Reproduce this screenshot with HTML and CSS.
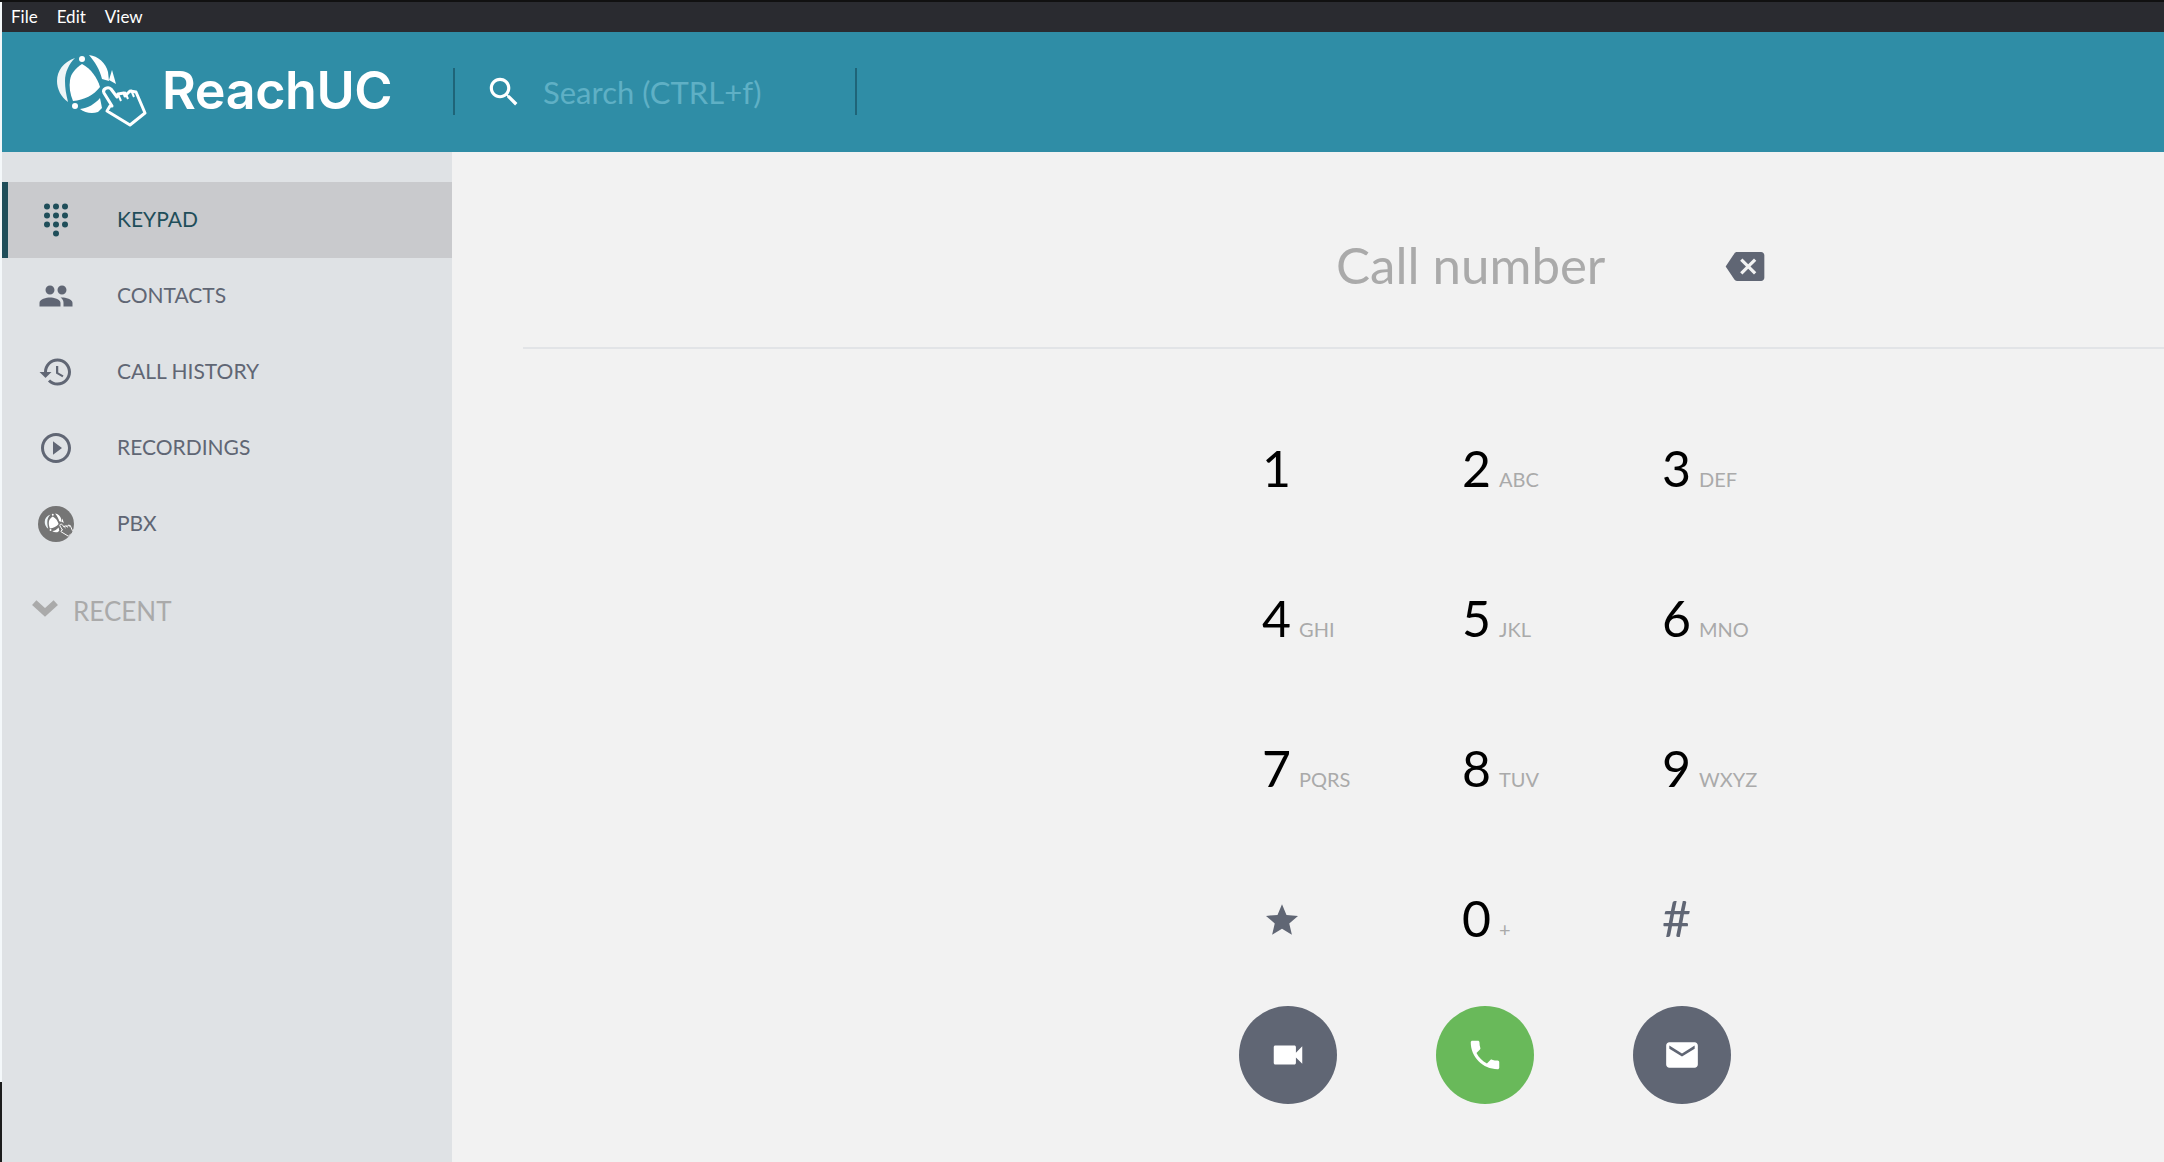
FILE: index.html
```html
<!DOCTYPE html>
<html lang="en">
<head>
  <meta charset="UTF-8" />
  <title>ReachUC</title>
  <link rel="stylesheet" href="styles.css">
</head>
<body>

<svg class="defs" aria-hidden="true">
  <symbol id="logo" viewBox="0 2 130 120">
    <path fill="#eef5f7" d="M45 28C33 32 27 41 27 51c0 8 4 16 11 21-2-8-3-14-3-21 0-9 4-17 10-23z"/>
    <circle fill="#fff" cx="52" cy="29" r="3"/>
    <circle fill="#fff" cx="45" cy="76" r="3"/>
    <path fill="#fff" d="M52 34c9 5 15 13 18 23-6 8-16 13-27 14-3-7-4-14-3-21 1-7 6-12 12-16z"/>
    <path fill="#fff" d="M59 25c9 1 17 8 19 17l1 9-7-2c-2-9-7-17-13-24z"/>
    <path fill="#fff" d="M82 40l4 14-7-4z"/>
    <path fill="#fff" d="M50 79c8-1 15-5 20-11l2 10-4 4c-6 2-13 1-18-3z"/>
    <path fill="currentColor" stroke="#fff" stroke-width="3" stroke-linejoin="round" d="M82 76L74 63c-2-4 4-7 7-4l6 8 1-3 6-1 1 3 5-5 6 1 9 21-15 12-23-14 3-5z"/>
    <path fill="none" stroke="#fff" stroke-width="2" d="M88 64l3 7M95 62l3 7M101 60l3 7"/>
  </symbol>
</svg>

<div class="menubar">
  <span>File</span>
  <span>Edit</span>
  <span>View</span>
</div>

<header class="topbar">
  <svg class="logo"><use href="#logo"/></svg>
  <span class="brand">ReachUC</span>
  <div class="search">
    <svg class="search-icon" viewBox="0 0 24 24"><path d="M15.5 14h-.79l-.28-.27C15.41 12.59 16 11.11 16 9.5 16 5.91 13.09 3 9.5 3S3 5.91 3 9.5 5.91 16 9.5 16c1.61 0 3.09-.59 4.23-1.57l.27.28v.79l5 4.99L20.49 19l-4.99-5zm-6 0C7.01 14 5 11.99 5 9.5S7.01 5 9.5 5 14 7.01 14 9.5 11.99 14 9.5 14z"/></svg>
    <span class="search-text">Search (CTRL+f)</span>
  </div>
</header>

<div class="layout">
  <aside class="sidebar">
    <a class="nav-item active">
      <svg class="nav-icon" viewBox="0 0 24 24">
        <circle cx="6" cy="3" r="2"/><circle cx="12" cy="3" r="2"/><circle cx="18" cy="3" r="2"/>
        <circle cx="6" cy="9" r="2"/><circle cx="12" cy="9" r="2"/><circle cx="18" cy="9" r="2"/>
        <circle cx="6" cy="15" r="2"/><circle cx="12" cy="15" r="2"/><circle cx="18" cy="15" r="2"/>
        <circle cx="12" cy="21" r="2"/>
      </svg>
      <span class="nav-label">KEYPAD</span>
    </a>
    <a class="nav-item">
      <svg class="nav-icon" viewBox="0 0 24 24"><path d="M16 11c1.66 0 2.99-1.34 2.99-3S17.66 5 16 5c-1.66 0-3 1.34-3 3s1.34 3 3 3zm-8 0c1.66 0 2.99-1.34 2.99-3S9.66 5 8 5C6.34 5 5 6.34 5 8s1.34 3 3 3zm0 2c-2.33 0-7 1.17-7 3.5V19h14v-2.5c0-2.33-4.67-3.5-7-3.5zm8 0c-.29 0-.62.02-.97.05 1.16.84 1.97 1.97 1.97 3.45V19h6v-2.5c0-2.33-4.67-3.5-7-3.5z"/></svg>
      <span class="nav-label">CONTACTS</span>
    </a>
    <a class="nav-item">
      <svg class="nav-icon" viewBox="0 0 24 24"><path d="M13 3c-4.97 0-9 4.03-9 9H1l3.89 3.89.07.14L9 12H6c0-3.87 3.13-7 7-7s7 3.13 7 7-3.13 7-7 7c-1.93 0-3.68-.79-4.94-2.06l-1.42 1.42C8.27 19.99 10.51 21 13 21c4.97 0 9-4.03 9-9s-4.03-9-9-9zm-1 5v5l4.28 2.54.72-1.21-3.5-2.08V8H12z"/></svg>
      <span class="nav-label">CALL HISTORY</span>
    </a>
    <a class="nav-item">
      <svg class="nav-icon" viewBox="0 0 24 24"><path d="M10 16.5l6-4.5-6-4.5v9zM12 2C6.48 2 2 6.48 2 12s4.48 10 10 10 10-4.48 10-10S17.52 2 12 2zm0 18c-4.41 0-8-3.59-8-8s3.59-8 8-8 8 3.59 8 8-3.59 8-8 8z"/></svg>
      <span class="nav-label">RECORDINGS</span>
    </a>
    <a class="nav-item">
      <span class="pbx-icon"><svg><use href="#logo"/></svg></span>
      <span class="nav-label">PBX</span>
    </a>
    <div class="recent">
      <svg class="chevron" viewBox="0 0 26 16"><path d="M3 3l10 9 10-9"/></svg>
      RECENT
    </div>
  </aside>

  <main class="dialer">
    <div class="dial-head">
      <span class="dial-input">Call number</span>
      <svg class="backspace" viewBox="0 0 24 18"><path d="M22 0H7C6.310 0 5.770.35 5.410.88L0 9l5.410 8.110c.36.53.9.89 1.590.89h15c1.100 0 2-.9 2-2V2c0-1.100-.9-2-2-2zm-3 12.590L17.590 14 14 10.410 10.410 14 9 12.590 12.590 9 9 5.410 10.410 4 14 7.590 17.590 4 19 5.410 15.410 9 19 12.590z"/></svg>
    </div>

    <div class="keypad">
      <div class="key"><span class="digit">1</span></div>
      <div class="key"><span class="digit">2</span><span class="letters">ABC</span></div>
      <div class="key"><span class="digit">3</span><span class="letters">DEF</span></div>
      <div class="key"><span class="digit">4</span><span class="letters">GHI</span></div>
      <div class="key"><span class="digit">5</span><span class="letters">JKL</span></div>
      <div class="key"><span class="digit">6</span><span class="letters">MNO</span></div>
      <div class="key"><span class="digit">7</span><span class="letters">PQRS</span></div>
      <div class="key"><span class="digit">8</span><span class="letters">TUV</span></div>
      <div class="key"><span class="digit">9</span><span class="letters">WXYZ</span></div>
      <div class="key"><svg class="star" viewBox="2 2 20 19"><path d="M12 17.270L18.180 21l-1.640-7.030L22 9.240l-7.190-.61L12 2 9.190 8.630 2 9.240l5.460 4.730L5.820 21z"/></svg></div>
      <div class="key"><span class="digit">0</span><span class="letters">+</span></div>
      <div class="key"><span class="digit hash">#</span></div>
    </div>

    <div class="actions">
      <button class="round">
        <svg viewBox="0 0 24 24"><path d="M17 10.500V7c0-.55-.45-1-1-1H4c-.55 0-1 .45-1 1v10c0 .55.45 1 1 1h12c.55 0 1-.45 1-1v-3.500l4 4v-11l-4 4z"/></svg>
      </button>
      <button class="round green">
        <svg viewBox="0 0 24 24"><path d="M6.620 10.790c1.440 2.830 3.760 5.140 6.590 6.590l2.200-2.200c.27-.27.67-.36 1.020-.24 1.120.37 2.330.57 3.570.57.55 0 1 .45 1 1V20c0 .55-.45 1-1 1-9.390 0-17-7.610-17-17 0-.55.45-1 1-1h3.500c.55 0 1 .45 1 1 0 1.250.2 2.450.57 3.570.11.35.03.74-.25 1.020l-2.200 2.200z"/></svg>
      </button>
      <button class="round">
        <svg viewBox="0 0 24 24"><path d="M20 4H4c-1.100 0-1.990.9-1.990 2L2 18c0 1.100.9 2 2 2h16c1.100 0 2-.9 2-2V6c0-1.100-.9-2-2-2zm0 4l-8 5-8-5V6l8 5 8-5v2z"/></svg>
      </button>
    </div>
  </main>
</div>

</body>
</html>
```

FILE: styles.css
```css
* {
  box-sizing: border-box;
}

html,
body {
  height: 100%;
}

body {
  margin: 0;
  padding-left: 2px;
  overflow: hidden;
  border-top: 2px solid #111;
  font-family: "Lato", "Noto Sans", sans-serif;
  background: linear-gradient(to bottom, #f4f8fa 0, #f4f8fa 1082px, #1c1c1c 1082px);
}

.defs {
  display: none;
}

.menubar {
  display: flex;
  align-items: center;
  gap: 19px;
  height: 30px;
  padding: 0 0 2px 9px;
  background: #2a2b30;
  color: #fff;
  font-size: 17px;
}

.topbar {
  display: flex;
  align-items: center;
  height: 120px;
  background: #2f8da6;
  color: #fff;
}

.logo {
  width: 130px;
  height: 120px;
  margin-left: 28px;
  color: #2f8da6;
  flex: none;
}

.brand {
  margin-left: 2px;
  width: 291px;
  font-family: "Inter", sans-serif;
  font-size: 52px;
  font-weight: 600;
  letter-spacing: -0.4px;
  margin-top: -4px;
}

.search {
  display: flex;
  align-items: center;
  width: 404px;
  height: 47px;
  margin-top: -1px;
  padding-left: 30px;
  border-left: 2px solid #1f6478;
  border-right: 2px solid #1f6478;
}

.search-icon {
  width: 38px;
  height: 38px;
  fill: #fff;
}

.search-text {
  margin-left: 20px;
  font-size: 31px;
  color: #5fb0c5;
}

.layout {
  display: flex;
  height: 1010px;
}

.sidebar {
  width: 450px;
  padding-top: 30px;
  background: #dfe2e5;
  flex: none;
}

.nav-item {
  display: flex;
  align-items: center;
  gap: 43px;
  height: 76px;
  padding-left: 36px;
  font-size: 21px;
  color: #606674;
}

.nav-item.active {
  padding-left: 30px;
  border-left: 6px solid #1f4e5a;
  background: #c9cacd;
  color: #1f4e5a;
}

.nav-label {
  margin-top: -3px;
}

.nav-icon {
  width: 36px;
  height: 36px;
  fill: currentColor;
  flex: none;
}

.pbx-icon {
  width: 36px;
  height: 36px;
  border-radius: 50%;
  background: #757575;
  color: #757575;
  flex: none;
  overflow: hidden;
}

.pbx-icon svg {
  display: block;
  width: 42px;
  height: 39px;
  margin-left: -2px;
}

.recent {
  display: flex;
  align-items: center;
  gap: 14px;
  margin-top: 33px;
  padding-left: 29px;
  font-size: 26px;
  color: #aaa;
}

.chevron {
  width: 28px;
  height: 18px;
  margin-top: -6px;
  fill: none;
  stroke: #aaa;
  stroke-width: 6;
}

.dialer {
  flex: 1;
  padding-left: 71px;
  background: #f2f2f2;
}

.dial-head {
  display: flex;
  align-items: center;
  height: 197px;
  padding: 30px 0 0 813px;
  border-bottom: 2px solid #e2e4e7;
}

.dial-input {
  width: 389px;
  font-size: 51px;
  color: #aaa;
}

.backspace {
  width: 40px;
  height: 29px;
  margin-top: 3px;
  fill: #606674;
}

.keypad {
  display: grid;
  grid-template-columns: repeat(3, 200px);
  grid-auto-rows: 150px;
  align-items: center;
  margin: 44px 0 0 739px;
}

.key {
  display: flex;
  align-items: baseline;
  gap: 8px;
}

.digit {
  font-size: 50px;
  line-height: 60px;
  color: #000;
}

.digit.hash {
  color: #606674;
}

.letters {
  font-size: 20px;
  color: #aaa;
}

.star {
  width: 32px;
  height: 31px;
  margin: 2px 0 0 4px;
  fill: #606674;
}

.actions {
  display: flex;
  gap: 99px;
  margin: 13px 0 0 716px;
}

.round {
  display: flex;
  align-items: center;
  justify-content: center;
  width: 98px;
  height: 98px;
  padding: 0;
  border: none;
  border-radius: 50%;
  background: #606674;
}

.round.green {
  background: #69b95a;
}

.round svg {
  width: 38px;
  height: 38px;
  fill: #fff;
}
```
